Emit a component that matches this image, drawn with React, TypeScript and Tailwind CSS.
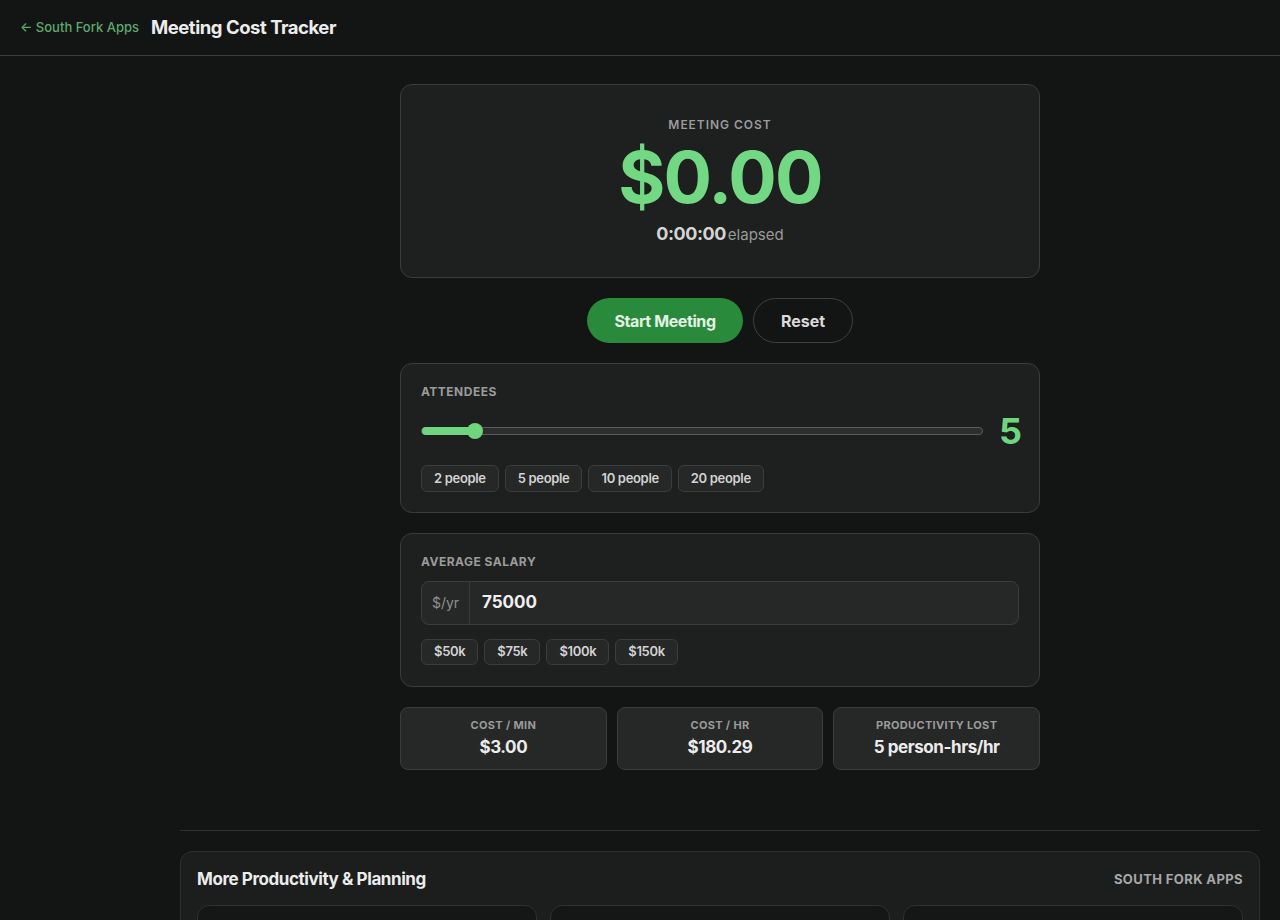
import React, { useState } from 'react';

const peoplePresets = [2, 5, 10, 20];
const salaryPresets = [
  { label: '$50k', value: 50000 },
  { label: '$75k', value: 75000 },
  { label: '$100k', value: 100000 },
  { label: '$150k', value: 150000 },
];

export default function App() {
  const [attendees, setAttendees] = useState(5);
  const [salary, setSalary] = useState('75000');

  // hourly cost: salary / 2080 work hours per attendee
  const perHour = (Number(salary) / 2080) * attendees;

  return (
    <div className="min-h-screen bg-[#131514] text-[#e6e6e6] font-['Inter',sans-serif]">
      {/* Header */}
      <header className="h-14 flex items-center px-5 border-b border-[#3a3c3b]">
        <a className="text-[13px] font-medium text-[#5ea86c] mr-3">← South Fork Apps</a>
        <h1 className="text-[18.5px] font-bold text-[#ececec] tracking-tight">Meeting Cost Tracker</h1>
      </header>

      <div className="pl-[180px] pr-5">
        {/* Main Workspace */}
        <main className="max-w-[640px] mx-auto pt-7 flex flex-col gap-5">
          <section className="h-[194px] rounded-xl border border-[#3b3c3c] bg-[#1e1f1f] flex flex-col items-center pt-[32px]">
            <p className="text-xs leading-4 font-semibold tracking-[0.08em] text-[#9a9b9a]">MEETING COST</p>
            <p className="text-[72px] leading-[72px] font-bold text-[#72d883] tracking-tight mt-2">$0.00</p>
            <p className="mt-[7px] flex items-baseline gap-0.5">
              <span className="text-lg font-bold text-[#d4d4d4] tracking-tight">0:00:00</span>
              <span className="text-[15px] text-[#9a9a9a]">elapsed</span>
            </p>
          </section>

          <div className="flex justify-center gap-2.5">
            <button className="h-[45px] w-[156px] rounded-full bg-[#2a8a3c] text-[16px] font-bold text-[#e3f3e4] tracking-tight">Start Meeting</button>
            <button className="h-[45px] w-[100px] rounded-full border border-[#3e403f] text-[16px] font-bold text-[#dadada]">Reset</button>
          </div>

          <section className="h-[150px] rounded-xl border border-[#3b3c3c] bg-[#1e1f1f] px-5 pt-[20px]">
            <p className="text-xs font-bold tracking-[0.04em] text-[#9a9b9a]">ATTENDEES</p>
            <div className="flex items-center gap-4 mt-[13px]">
              <div className="relative flex-1 h-2 rounded-full bg-[#2c2d2d] border border-[#5a5b5b]">
                <div className="absolute left-0 top-[-1px] h-2 w-[9.4%] rounded-full bg-[#6fd67f]" />
                <div className="absolute left-[9.4%] top-1/2 -translate-x-1/2 -translate-y-1/2 h-4 w-4 rounded-full bg-[#6fd67f]" />
              </div>
              <span className="text-[36px] leading-none font-bold text-[#6fd67f] w-5 text-right">{attendees}</span>
            </div>
            <div className="flex gap-1.5 mt-4">
              {peoplePresets.map((n) => (
                <button
                  key={n}
                  onClick={() => setAttendees(n)}
                  className="h-[27px] px-3 rounded-md border border-[#3b3c3c] bg-[#262727] text-[13px] font-semibold text-[#d2d2d2] tracking-tight"
                >
                  {n} people
                </button>
              ))}
            </div>
          </section>

          <section className="h-[154px] rounded-xl border border-[#3b3c3c] bg-[#1e1f1f] px-5 pt-[20px]">
            <p className="text-xs font-bold tracking-[0.04em] text-[#9a9b9a]">AVERAGE SALARY</p>
            <div className="mt-[11px] h-11 flex rounded-lg border border-[#3b3c3c] bg-[#262828] overflow-hidden">
              <span className="w-12 flex items-center justify-center border-r border-[#3b3c3c] text-sm text-[#8e908f]">$/yr</span>
              <input
                value={salary}
                onChange={(e) => setSalary(e.target.value)}
                className="flex-1 bg-transparent px-3 text-[17px] font-bold text-[#f0f0f0] outline-none"
              />
            </div>
            <div className="flex gap-1.5 mt-[14px]">
              {salaryPresets.map((s) => (
                <button
                  key={s.label}
                  onClick={() => setSalary(String(s.value))}
                  className="h-[26px] px-3 rounded-md border border-[#3b3c3c] bg-[#262727] text-[13px] font-semibold text-[#d2d2d2] tracking-tight"
                >
                  {s.label}
                </button>
              ))}
            </div>
          </section>

          <div className="grid grid-cols-3 gap-2.5">
            {[
              { label: 'COST / MIN', value: '$3.00' },
              { label: 'COST / HR', value: `$${perHour.toFixed(2)}` },
              { label: 'PRODUCTIVITY LOST', value: `${attendees} person-hrs/hr` },
            ].map((s) => (
              <div key={s.label} className="h-[63px] rounded-lg border border-[#3b3c3c] bg-[#262727] flex flex-col items-center justify-center gap-0.5">
                <p className="text-[11px] font-bold tracking-[0.03em] text-[#9a9b9a]">{s.label}</p>
                <p className="text-[17px] font-bold text-[#ececec] tracking-tight">{s.value}</p>
              </div>
            ))}
          </div>
        </main>

        <div className="mt-[60px] border-t border-[#2a332d]" />

        <section className="mt-5 rounded-xl border border-[#2d312e] bg-[#1b1e1c] px-4 pt-[15px] pb-6">
          <div className="flex items-center justify-between">
            <h2 className="text-[17px] font-bold text-[#ececec] tracking-tight">More Productivity &amp; Planning</h2>
            <span className="text-[13px] font-bold tracking-[0.03em] text-[#a6a8a7]">SOUTH FORK APPS</span>
          </div>
          <div className="grid grid-cols-3 gap-[13px] mt-[12px]">
            {[0, 1, 2].map((i) => (
              <div key={i} className="h-32 rounded-xl border border-[#2e322f] bg-[#151716]" />
            ))}
          </div>
        </section>
      </div>
    </div>
  );
}
